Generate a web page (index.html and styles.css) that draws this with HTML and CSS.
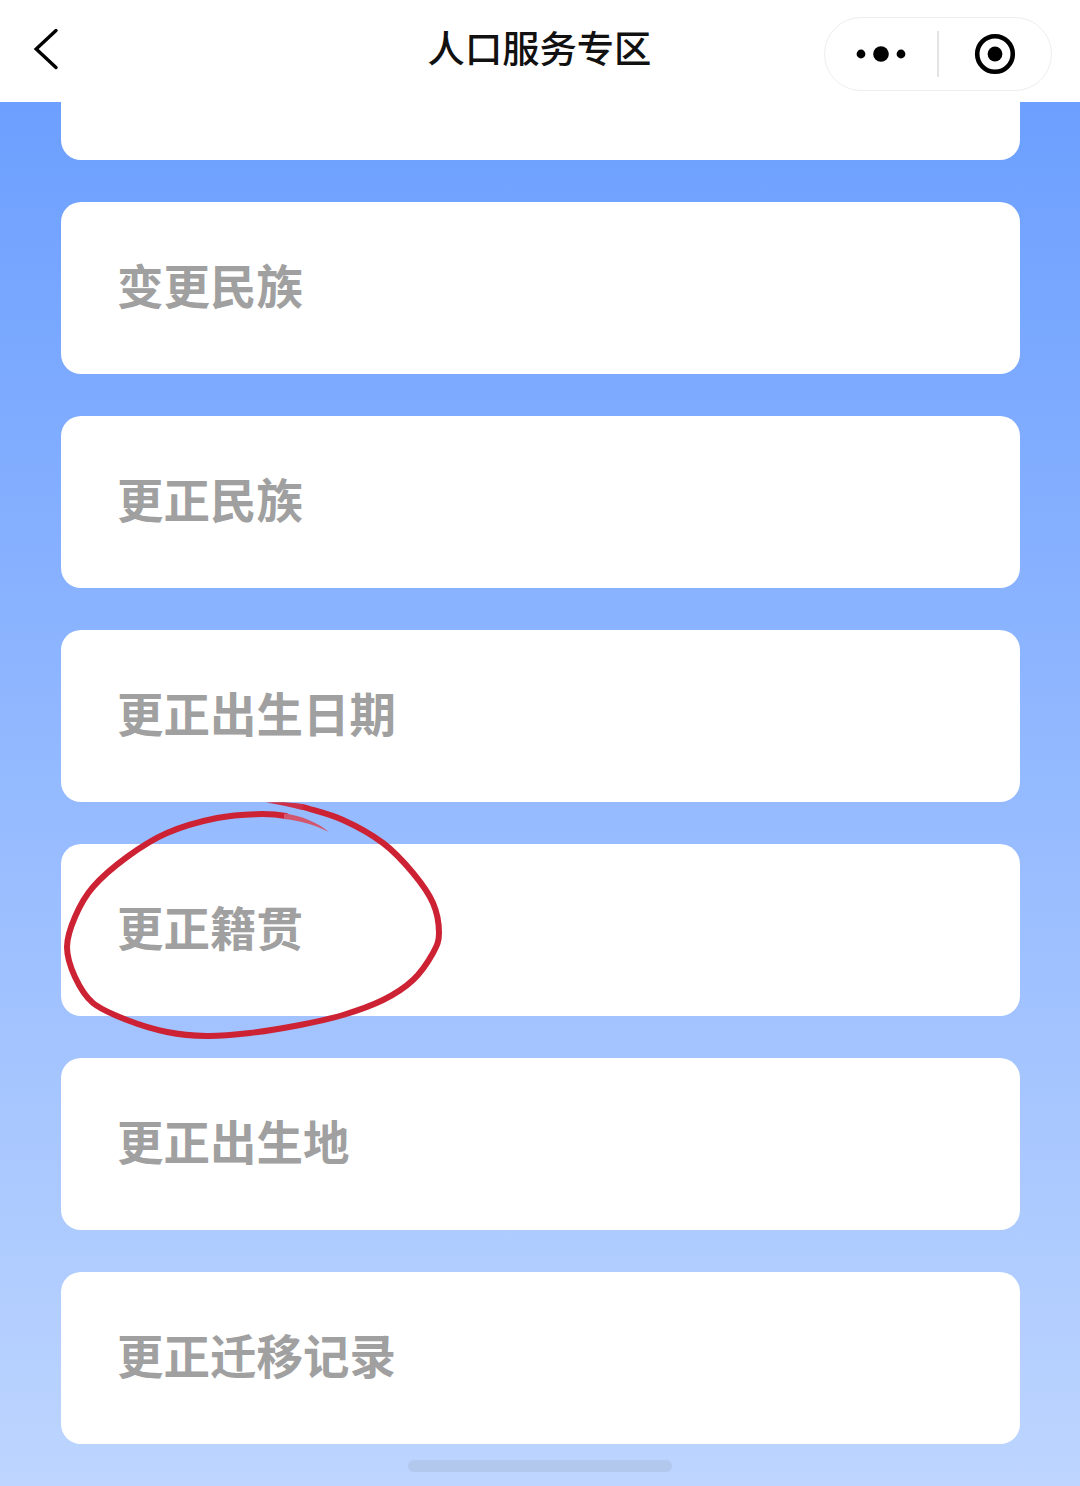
FILE: index.html
```html
<!DOCTYPE html>
<html lang="zh-CN">
<head>
    <meta charset="UTF-8">
    <meta name="viewport" content="width=device-width, initial-scale=1.0">
    <title>人口服务专区</title>
    <link rel="stylesheet" href="styles.css">
</head>
<body>
    <div class="container">
        <div class="header">
            <button class="back-button" aria-label="返回">
                <svg width="30" height="46" viewBox="0 0 30 46">
                    <path d="M25 4.5 L5.2 23 L25 41.5" fill="none" stroke="#000" stroke-width="3.4" stroke-linecap="round" stroke-linejoin="miter"/>
                </svg>
            </button>
            <h1>人口服务专区</h1>
            <div class="capsule">
                <div class="capsule-part">
                    <svg width="56" height="20" viewBox="0 0 56 20">
                        <circle cx="8" cy="10" r="4.4" fill="#000"/>
                        <circle cx="28" cy="10" r="7.8" fill="#000"/>
                        <circle cx="48" cy="10" r="4.4" fill="#000"/>
                    </svg>
                </div>
                <div class="capsule-line"></div>
                <div class="capsule-part">
                    <svg width="44" height="44" viewBox="0 0 44 44">
                        <circle cx="22" cy="22" r="17.8" fill="none" stroke="#000" stroke-width="4.6"/>
                        <circle cx="22" cy="22" r="7.4" fill="#000"/>
                    </svg>
                </div>
            </div>
        </div>

        <div class="list">
            <div class="card card-cut"></div>
            <div class="card">变更民族</div>
            <div class="card">更正民族</div>
            <div class="card">更正出生日期</div>
            <div class="card">更正籍贯</div>
            <div class="card">更正出生地</div>
            <div class="card">更正迁移记录</div>
        </div>

        <!-- 手写红圈 -->
        <svg class="circle-mark" width="1080" height="1486" viewBox="0 0 1080 1486">
            <path d="M286 816 C278 814.5 271 814 263 814 C249.8 814.2 233 814.8 217 818 C201 821.2 182 826.5 167 833 C152 839.5 139.3 848 127 857 C114.7 866 101.7 877 93 887 C84.3 897 79.3 907 75 917 C70.7 927 67 937 67 947 C67 957 70.7 967.7 75 977 C79.3 986.3 84.3 995.8 93 1003 C101.7 1010.2 114.7 1015.2 127 1020 C139.3 1024.8 153.7 1029.3 167 1032 C180.3 1034.7 193.2 1035.8 207 1036 C220.8 1036.2 234.5 1034.8 250 1033 C265.5 1031.2 284.5 1028 300 1025 C315.5 1022 329.2 1019.2 343 1015 C356.8 1010.8 371.3 1005.8 383 1000 C394.7 994.2 404.7 987.8 413 980 C421.3 972.2 428.7 960.8 433 953 C437.3 945.2 439 941.3 439 933 C439 924.7 437.3 913 433 903 C428.7 893 421.3 883 413 873 C404.7 863 394.7 851.8 383 843 C371.3 834.2 356.3 826 343 820 C329.7 814 316 811 303 807"
                  fill="none" stroke="#cc2233" stroke-width="6" stroke-linecap="round"/>
            <path d="M304 804.2 C290 802 278 802 266 802.5 C278 804.5 290 806.5 302 810 Z" fill="#cc3048"/>
            <path d="M284 813.5 C302 815.5 318 823 329 832 C316 825.5 302 821 284 819 Z" fill="#d2566e"/>
        </svg>

        <div class="home-bar"></div>
    </div>
</body>
</html>
```

FILE: styles.css
```css
/* 基础样式 */
body {
    margin: 0;
    padding: 0;
    font-family: "Noto Sans CJK SC", "Noto Sans", sans-serif;
}

.container {
    width: 1080px;
    height: 1486px;
    position: relative;
    overflow: hidden;
    background: linear-gradient(180deg, #6c9fff 102px, #bdd5ff 100%);
}

/* 顶部导航 */
.header {
    height: 102px;
    background: #ffffff;
    display: grid;
    grid-template-columns: 1fr auto 1fr;
    align-items: center;
    padding: 0 28px 0 31px;
    box-sizing: border-box;
}

.back-button {
    background: none;
    border: none;
    padding: 0;
    width: 30px;
    height: 46px;
    margin-top: -4px;
    display: flex;
}

.header h1 {
    margin: 0 4px 8px 0;
    font-size: 37.3px;
    line-height: 50px;
    font-weight: 500;
    color: #111111;
}

.capsule {
    width: 228px;
    height: 74px;
    margin-top: 6px;
    justify-self: end;
    border: 1px solid #eeeeee;
    border-radius: 37px;
    box-sizing: border-box;
    display: flex;
    align-items: center;
}

.capsule-part {
    flex: 1;
    display: flex;
    justify-content: center;
    align-items: center;
}

.capsule-line {
    width: 2px;
    height: 46px;
    background: #e4e4e4;
}

/* 列表 */
.list {
    display: flex;
    flex-direction: column;
    gap: 42px;
    padding: 0 60px 0 61px;
}

.card {
    height: 172px;
    background: #ffffff;
    border-radius: 20px;
    padding: 0 0 10px 56px;
    box-sizing: border-box;
    display: flex;
    align-items: center;
    font-size: 46.5px;
    font-weight: 700;
    color: #a0a0a0;
}

.card-cut {
    height: 58px;
    border-radius: 0 0 20px 20px;
}

.circle-mark {
    position: absolute;
    left: 0;
    top: 0;
    pointer-events: none;
}

.home-bar {
    position: absolute;
    left: 408px;
    bottom: 14px;
    width: 264px;
    height: 12px;
    border-radius: 6px;
    background: #b2c8ec;
}
```
